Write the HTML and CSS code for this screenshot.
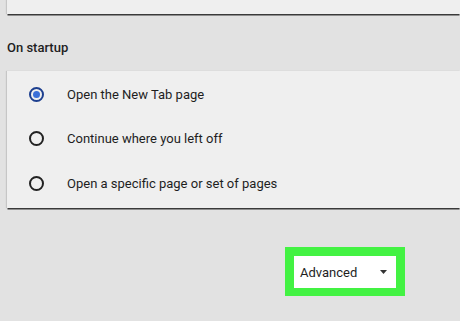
FILE: index.html
```html
<!DOCTYPE html>
<html lang="en">

<head>
    <meta charset="UTF-8">
    <title>On startup</title>
    <link rel="stylesheet" href="styles.css">
</head>

<body>
    <div class="card top-card"></div>

    <h2 class="section-title">On startup</h2>

    <div class="card startup">
        <label class="option">
            <span class="radio checked"></span>
            <span class="label">Open the New Tab page</span>
        </label>
        <label class="option">
            <span class="radio"></span>
            <span class="label">Continue where you left off</span>
        </label>
        <label class="option">
            <span class="radio"></span>
            <span class="label">Open a specific page or set of pages</span>
        </label>
    </div>

    <div class="advanced-row">
        <div class="highlight">
            <div class="advanced">
                <span>Advanced</span>
                <!-- small drop arrow -->
                <svg class="caret" width="7" height="4" viewBox="0 0 7 4">
                    <path d="M0 0h7L3.5 4z" fill="#333" />
                </svg>
            </div>
        </div>
    </div>
</body>

</html>
```

FILE: styles.css
```css
html,
body {
    margin: 0;
    height: 100%;
}

body {
    background: #e2e2e2;
    font-family: Roboto, "Liberation Sans", Arial, sans-serif;
    color: #1e1e1e;
    padding-left: 7px;
    overflow: hidden;
}

.card {
    background: #efefef;
    box-shadow: 0 2px 0 -0.5px #3a3a3a, -1px 0 1px rgba(0, 0, 0, .12);
}

.top-card {
    height: 14px;
}

.section-title {
    margin: 0 0 14px;
    padding-top: 25px;
    font-size: 13px;
    font-weight: 500;
    line-height: 18px;
}

.startup {
    padding: 1px 0 2px;
}

.option {
    display: flex;
    align-items: center;
    height: 44.5px;
    padding-left: 22px;
    font-size: 13px;
}

.radio {
    width: 11px;
    height: 11px;
    border: 2px solid #222;
    border-radius: 50%;
    box-sizing: content-box;
    margin-right: 23px;
    position: relative;
}

.radio.checked {
    border-color: #1d3f8f;
}

.radio.checked::after {
    content: "";
    position: absolute;
    left: 2px;
    top: 2px;
    width: 7px;
    height: 7px;
    border-radius: 50%;
    background: #3a6fd8;
}

.advanced-row {
    display: flex;
    justify-content: flex-end;
    padding: 39px 55px 0 0;
}

.highlight {
    background: #43f243;
    padding: 9px 9px 8px;
}

.advanced {
    background: #fff;
    width: 102px;
    height: 32px;
    box-sizing: border-box;
    display: flex;
    align-items: center;
    justify-content: space-between;
    padding: 1px 9px 0 6px;
    font-size: 13px;
}

.caret {
    display: block;
}
```
